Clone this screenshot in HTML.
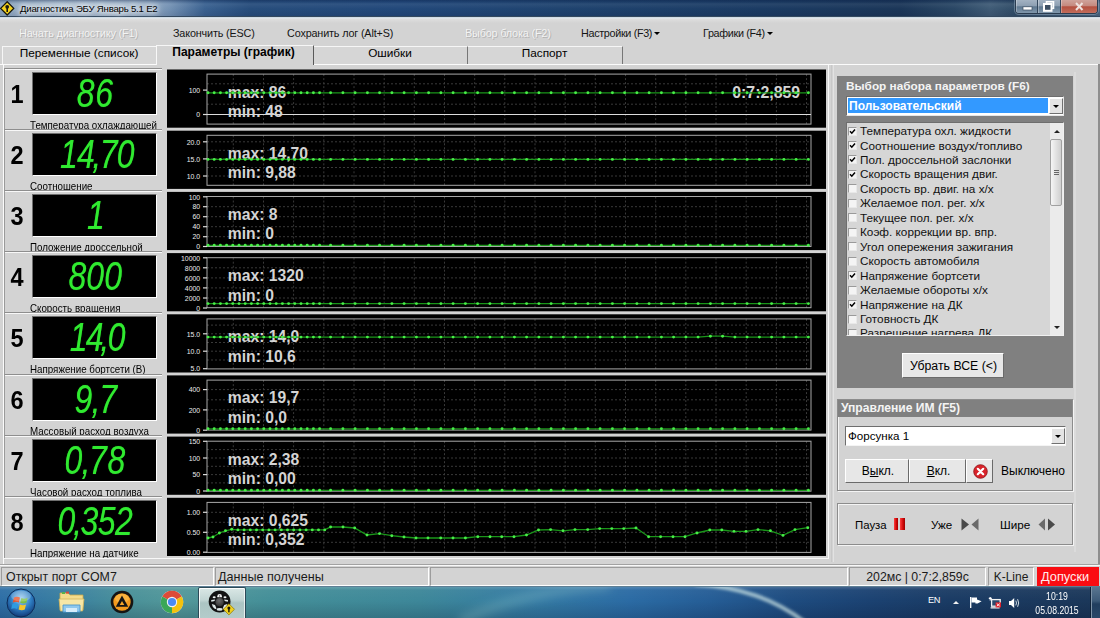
<!DOCTYPE html>
<html lang="ru"><head><meta charset="utf-8"><title>Диагностика ЭБУ Январь 5.1 E2</title><style>
html,body{margin:0;padding:0}
body{width:1100px;height:618px;overflow:hidden;position:relative;background:#d3d3d3;font-family:"Liberation Sans",sans-serif;color:#000}
div,span{box-sizing:border-box}
.a{position:absolute;white-space:nowrap}
.menu{position:absolute;top:27px;font-size:10.8px;line-height:13px;white-space:nowrap;letter-spacing:-0.15px;color:#151515}
.dis{color:#f4f4f4;text-shadow:1px 1px 0 #b4b4b4, -0.5px -0.5px 0 #c4c4c4}
.tab{position:absolute;top:46px;height:18px;font-size:11.8px;line-height:16px;text-align:center;white-space:nowrap;border-right:1px solid #777;border-top:1px solid #f6f6f6;background:#d6d6d6}
.rowp{position:absolute;left:4px;width:158px;height:63px;border-top:1px solid #8e8e8e;border-left:1px solid #9a9a9a;box-shadow:inset 0 1px 0 #f8f8f8;overflow:hidden}
.num{position:absolute;left:4px;top:12px;font-weight:bold;font-size:25px;line-height:28px;width:16px;text-align:center;transform:scaleX(.94)}
.disp{position:absolute;left:27px;top:4px;width:125px;height:43px;background:#000;border-top:1px solid #6e6e6e;border-left:1px solid #6e6e6e;border-right:1px solid #fff;border-bottom:1px solid #fff;overflow:hidden}
.seg{position:absolute;left:-10px;right:-10px;top:1px;text-align:center;color:#30ea30;font-style:italic;font-size:40px;line-height:38px;transform:scaleX(0.8);letter-spacing:0.5px;text-shadow:0 0 1px #1a8a1a}
.seg i{font-style:italic;display:inline-block;width:8px;margin-left:-2px;margin-right:1.5px}
.lbl{position:absolute;left:25px;font-size:10.5px;line-height:12px;white-space:nowrap;color:#000;transform:scaleX(.93);transform-origin:0 0}
.gp{position:absolute;left:167px;width:659px;height:59px;background:#000}

.t12{font-size:12px;line-height:14px}
.btn{position:absolute;background:#e7e7e7;border-top:1px solid #fff;border-left:1px solid #fff;border-right:1px solid #6a6a6a;border-bottom:1px solid #6a6a6a;text-align:center;white-space:nowrap}
.etch{position:absolute;border:1px solid #8c8c8c;box-shadow:1px 1px 0 #f4f4f4, inset 1px 1px 0 #f4f4f4}
.cb{position:absolute;left:1px;width:9px;height:9px;background:#f4f4f4;border:1px solid #9a9a9a;border-right-color:#e8e8e8;border-bottom-color:#e8e8e8}
.li{position:absolute;left:13px;font-size:11.75px;line-height:14px;white-space:nowrap;color:#111}
.sf{position:absolute;top:567px;height:19px;border-top:1px solid #9c9c9c;border-left:1px solid #9c9c9c;border-right:1px solid #fff;border-bottom:1px solid #fff;font-size:12.4px;line-height:18px;white-space:nowrap;color:#1a1a1a}
</style></head><body>
<div class="a" style="left:0;top:0;width:1100px;height:17px;background:linear-gradient(90deg,#8ba4be 0,#a9bccf 60px,#9fb4ca 135px,#7391b3 170px,#3a6190 205px,#274d7c 250px,#22487a 400px,#1f436f 560px,#1b3b63 760px,#1b3658 900px,#2a4765 955px,#3f5b76 990px,#314d68 1015px,#4a657f 1100px)"></div>
<div class="a" style="left:0;top:0;width:1100px;height:17px;background:linear-gradient(180deg,rgba(10,30,70,.38) 0,rgba(10,30,70,.12) 2px,rgba(255,255,255,.06) 4px,rgba(255,255,255,0) 9px,rgba(0,0,30,.10) 17px)"></div>
<div class="a" style="left:0;top:16px;width:1100px;height:1px;background:#34495f"></div>
<div class="a" style="left:0;top:17px;width:1100px;height:2px;background:linear-gradient(180deg,#c9d9e6,#e8e8e8)"></div>
<div class="a" style="left:0;top:19px;width:1100px;height:4px;background:linear-gradient(180deg,#dedede,#d3d3d3)"></div>
<svg class="a" style="left:0;top:1px" width="15" height="15" viewBox="0 0 15 15"><path d="M7.2 0.8 L13.8 7.4 L7.2 14 L0.6 7.4 Z" fill="#f4d21c" stroke="#15150c" stroke-width="1.3" stroke-linejoin="round"/><circle cx="7.2" cy="5.8" r="1.9" fill="#1a1a12"/><rect x="6.4" y="7" width="1.6" height="4" fill="#1a1a12"/></svg><div class="a" style="left:20px;top:3px;font-size:9.6px;line-height:12px;letter-spacing:-0.2px;color:#000;text-shadow:0 0 4px #fff,0 0 6px #fff,0 0 8px #fff">Диагностика ЭБУ Январь 5.1 E2</div>
<div class="a" style="left:1015px;top:0;width:83px;height:14px;border:1px solid #2a3c50;border-top:0;border-radius:0 0 4px 4px;overflow:hidden;background:#7d93a8;box-shadow:0 0 0 1px rgba(190,210,225,.35)">
<div class="a" style="left:0;top:0;width:22px;height:13px;background:linear-gradient(180deg,#a3b2c2 0,#8d9fb2 45%,#5f7890 52%,#8097ac 100%);border-right:1px solid #33475c;box-shadow:inset 1px 0 0 rgba(255,255,255,.3)"></div>
<div class="a" style="left:22px;top:0;width:23px;height:13px;background:linear-gradient(180deg,#a3b2c2 0,#8d9fb2 45%,#5f7890 52%,#8097ac 100%);border-right:1px solid #33475c;box-shadow:inset 1px 0 0 rgba(255,255,255,.3)"></div>
<div class="a" style="left:45px;top:0;width:37px;height:13px;background:linear-gradient(180deg,#cfa39b 0,#c58a7f 45%,#b4503f 52%,#c26d5c 100%);box-shadow:inset 1px 0 0 rgba(255,255,255,.3)"></div>
<svg class="a" style="left:0;top:0" width="82" height="13" viewBox="0 0 82 13"><rect x="7" y="6.8" width="9" height="3.2" fill="#fff" stroke="#3c4e62" stroke-width=".7"/>
<rect x="30.5" y="1.8" width="7" height="6.5" fill="none" stroke="#fff" stroke-width="1.6"/><rect x="28" y="4" width="7.5" height="6.8" fill="#3c4e62" stroke="#fff" stroke-width="2"/>
<path d="M60 3 L66.5 10 M66.5 3 L60 10" stroke="#efe2de" stroke-width="2" fill="none"/></svg>
</div>
<div class="menu dis" style="left:19px">Начать диагностику (F1)</div>
<div class="menu" style="left:173px">Закончить (ESC)</div>
<div class="menu" style="left:287px">Сохранить лог (Alt+S)</div>
<div class="menu dis" style="left:465px">Выбор блока (F2)</div>
<div class="menu" style="left:581px;letter-spacing:-0.33px">Настройки (F3)<span style="display:inline-block;width:0;height:0;border-left:3px solid transparent;border-right:3px solid transparent;border-top:3px solid #000;margin-left:2px;vertical-align:2px"></span></div>
<div class="menu" style="left:703px;letter-spacing:-0.33px">Графики (F4)<span style="display:inline-block;width:0;height:0;border-left:3px solid transparent;border-right:3px solid transparent;border-top:3px solid #000;margin-left:2px;vertical-align:2px"></span></div>
<div class="a" style="left:0;top:64px;width:1098px;height:1px;background:#fbfbfb"></div>
<div class="a" style="left:1098px;top:64px;width:2px;height:500px;background:#8e8e8e"></div>
<div class="a" style="left:3px;top:65px;width:1px;height:500px;background:#fbfbfb"></div>
<div class="tab" style="left:2px;width:155px;border-left:1px solid #f6f6f6;line-height:13px;padding-right:1px">Переменные (список)</div>
<div class="tab" style="left:156px;width:158px;top:45px;height:20px;font-weight:bold;background:#d3d3d3;border-left:1px solid #f8f8f8;border-right:1px solid #5a5a5a;line-height:13px;font-size:12px;padding-right:3px">Параметры (график)</div>
<div class="tab" style="left:314px;width:154px;line-height:13px;padding-right:1px">Ошибки</div>
<div class="tab" style="left:468px;width:155px;line-height:13px;padding-right:1px">Паспорт</div>
<div class="rowp" style="top:68px"><div class="num" style="top:11px">1</div><div class="disp" style="top:3px"><div class="seg" style="letter-spacing:0.90px;margin-left:0.6px">86</div></div><div class="lbl" style="top:49.7px">Температура охлаждающей</div></div>
<div class="rowp" style="top:129px"><div class="num" style="top:11px">2</div><div class="disp" style="top:3px"><div class="seg" style="letter-spacing:-1.05px;margin-left:5.3px">14<i>,</i>70</div></div><div class="lbl" style="top:49.7px">Соотношение</div></div>
<div class="rowp" style="top:190px"><div class="num" style="top:11px">3</div><div class="disp" style="top:3px"><div class="seg" style="letter-spacing:0.50px;margin-left:2.8px">1</div></div><div class="lbl" style="top:49.7px">Положение дроссельной</div></div>
<div class="rowp" style="top:251px"><div class="num" style="top:11px">4</div><div class="disp" style="top:3px"><div class="seg" style="letter-spacing:0.20px;margin-left:2.3px">800</div></div><div class="lbl" style="top:49.7px">Скорость вращения</div></div>
<div class="rowp" style="top:312px"><div class="num" style="top:11px">5</div><div class="disp" style="top:3px"><div class="seg" style="letter-spacing:-2.30px;margin-left:5.4px">14<i>,</i>0</div></div><div class="lbl" style="top:49.7px">Напряжение бортсети (В)</div></div>
<div class="rowp" style="top:374px"><div class="num" style="top:11px">6</div><div class="disp" style="top:3px"><div class="seg" style="letter-spacing:1.25px;margin-left:2.6px">9<i>,</i>7</div></div><div class="lbl" style="top:49.7px">Массовый расход воздуха</div></div>
<div class="rowp" style="top:435px"><div class="num" style="top:11px">7</div><div class="disp" style="top:3px"><div class="seg" style="letter-spacing:0.90px;margin-left:2.3px">0<i>,</i>78</div></div><div class="lbl" style="top:49.7px">Часовой расход топлива</div></div>
<div class="rowp" style="top:496px"><div class="num" style="top:11px">8</div><div class="disp" style="top:3px"><div class="seg" style="letter-spacing:-0.75px;margin-left:1.4px">0<i>,</i>352</div></div><div class="lbl" style="top:49.7px">Напряжение на датчике</div></div>
<svg class="a" style="left:167px;top:69px" width="660" height="490" viewBox="167 69 660 490"><defs><marker id="dot" markerWidth="5" markerHeight="5" refX="2.5" refY="2.5" markerUnits="userSpaceOnUse"><circle cx="2.5" cy="2.5" r="1.45" fill="#48ee48"/></marker></defs><rect x="167" y="69.5" width="659" height="58.2" fill="#000"/><g stroke="#393939" stroke-width="1" stroke-dasharray="2 2"><line x1="233.3" y1="74.1" x2="233.3" y2="124.1"/><line x1="263.5" y1="74.1" x2="263.5" y2="124.1"/><line x1="293.6" y1="74.1" x2="293.6" y2="124.1"/><line x1="323.8" y1="74.1" x2="323.8" y2="124.1"/><line x1="354.0" y1="74.1" x2="354.0" y2="124.1"/><line x1="384.2" y1="74.1" x2="384.2" y2="124.1"/><line x1="414.3" y1="74.1" x2="414.3" y2="124.1"/><line x1="444.5" y1="74.1" x2="444.5" y2="124.1"/><line x1="474.7" y1="74.1" x2="474.7" y2="124.1"/><line x1="504.8" y1="74.1" x2="504.8" y2="124.1"/><line x1="535.0" y1="74.1" x2="535.0" y2="124.1"/><line x1="565.2" y1="74.1" x2="565.2" y2="124.1"/><line x1="595.3" y1="74.1" x2="595.3" y2="124.1"/><line x1="625.5" y1="74.1" x2="625.5" y2="124.1"/><line x1="655.7" y1="74.1" x2="655.7" y2="124.1"/><line x1="685.8" y1="74.1" x2="685.8" y2="124.1"/><line x1="716.0" y1="74.1" x2="716.0" y2="124.1"/><line x1="746.2" y1="74.1" x2="746.2" y2="124.1"/><line x1="776.4" y1="74.1" x2="776.4" y2="124.1"/><line x1="806.5" y1="74.1" x2="806.5" y2="124.1"/><line x1="207" y1="83.8" x2="811" y2="83.8"/><line x1="207" y1="104.2" x2="811" y2="104.2"/></g><rect x="207" y="74.1" width="604" height="50.0" fill="none" stroke="#a8a8a8" stroke-width="1"/><line x1="203" y1="114.5" x2="811" y2="114.5" stroke="#dcdcdc" stroke-width="1.1"/><text transform="translate(200.2,92.8) scale(.9,1)" font-family="Liberation Sans, sans-serif" font-size="7.7" fill="#ececec" text-anchor="end">100</text><line x1="203" y1="90.1" x2="207" y2="90.1" stroke="#dadada" stroke-width="1.2"/><text transform="translate(200.2,117.2) scale(.9,1)" font-family="Liberation Sans, sans-serif" font-size="7.7" fill="#ececec" text-anchor="end">0</text><line x1="203" y1="114.5" x2="207" y2="114.5" stroke="#dadada" stroke-width="1.2"/><text x="227.8" y="97.5" font-family="Liberation Sans, sans-serif" font-weight="bold" font-size="15.7" fill="#d4d4d4">max: 86</text><text x="227.8" y="117.0" font-family="Liberation Sans, sans-serif" font-weight="bold" font-size="15.7" fill="#d4d4d4">min: 48</text> <text x="732.2" y="97.5" font-family="Liberation Sans, sans-serif" font-weight="bold" font-size="15.9" fill="#d4d4d4">0:7:2,859</text><polyline points="208.0,92.8 214.2,92.8 220.4,92.8 226.6,92.8 232.8,92.8 239.0,92.8 245.2,92.8 251.4,92.8 257.6,92.8 263.8,92.8 270.0,92.8 276.2,92.8 282.4,92.8 288.6,92.8 294.8,92.8 301.0,92.8 307.2,92.8 313.4,92.8 319.6,92.8 330.6,92.8 342.9,92.8 355.1,92.8 367.4,92.8 379.6,92.8 391.9,92.8 404.1,92.8 416.4,92.8 428.6,92.8 440.9,92.8 453.1,92.8 465.4,92.8 477.6,92.8 489.9,92.8 502.1,92.8 514.4,92.8 526.6,92.8 538.9,92.8 551.1,92.8 563.4,92.8 575.6,92.8 587.9,92.8 600.1,92.8 612.4,92.8 624.6,92.8 636.9,92.8 649.1,92.8 661.4,92.8 673.6,92.8 685.9,92.8 698.1,92.8 710.4,92.8 722.6,92.8 734.9,92.8 747.1,92.8 759.4,92.8 771.6,92.8 783.9,92.8 796.1,92.8 808.4,92.8" fill="none" stroke="#1a961a" stroke-width="1.3" marker-start="url(#dot)" marker-mid="url(#dot)" marker-end="url(#dot)"/><rect x="167" y="130.7" width="659" height="58.2" fill="#000"/><g stroke="#393939" stroke-width="1" stroke-dasharray="2 2"><line x1="233.3" y1="135.3" x2="233.3" y2="185.3"/><line x1="263.5" y1="135.3" x2="263.5" y2="185.3"/><line x1="293.6" y1="135.3" x2="293.6" y2="185.3"/><line x1="323.8" y1="135.3" x2="323.8" y2="185.3"/><line x1="354.0" y1="135.3" x2="354.0" y2="185.3"/><line x1="384.2" y1="135.3" x2="384.2" y2="185.3"/><line x1="414.3" y1="135.3" x2="414.3" y2="185.3"/><line x1="444.5" y1="135.3" x2="444.5" y2="185.3"/><line x1="474.7" y1="135.3" x2="474.7" y2="185.3"/><line x1="504.8" y1="135.3" x2="504.8" y2="185.3"/><line x1="535.0" y1="135.3" x2="535.0" y2="185.3"/><line x1="565.2" y1="135.3" x2="565.2" y2="185.3"/><line x1="595.3" y1="135.3" x2="595.3" y2="185.3"/><line x1="625.5" y1="135.3" x2="625.5" y2="185.3"/><line x1="655.7" y1="135.3" x2="655.7" y2="185.3"/><line x1="685.8" y1="135.3" x2="685.8" y2="185.3"/><line x1="716.0" y1="135.3" x2="716.0" y2="185.3"/><line x1="746.2" y1="135.3" x2="746.2" y2="185.3"/><line x1="776.4" y1="135.3" x2="776.4" y2="185.3"/><line x1="806.5" y1="135.3" x2="806.5" y2="185.3"/><line x1="207" y1="141.8" x2="811" y2="141.8"/><line x1="207" y1="150.3" x2="811" y2="150.3"/><line x1="207" y1="158.9" x2="811" y2="158.9"/><line x1="207" y1="167.5" x2="811" y2="167.5"/><line x1="207" y1="176.0" x2="811" y2="176.0"/></g><rect x="207" y="135.3" width="604" height="50.0" fill="none" stroke="#a8a8a8" stroke-width="1"/><text transform="translate(200.2,144.5) scale(.9,1)" font-family="Liberation Sans, sans-serif" font-size="7.7" fill="#ececec" text-anchor="end">20.0</text><line x1="203" y1="141.8" x2="207" y2="141.8" stroke="#dadada" stroke-width="1.2"/><text transform="translate(200.2,161.6) scale(.9,1)" font-family="Liberation Sans, sans-serif" font-size="7.7" fill="#ececec" text-anchor="end">15.0</text><line x1="203" y1="158.9" x2="207" y2="158.9" stroke="#dadada" stroke-width="1.2"/><text transform="translate(200.2,178.7) scale(.9,1)" font-family="Liberation Sans, sans-serif" font-size="7.7" fill="#ececec" text-anchor="end">10.0</text><line x1="203" y1="176.0" x2="207" y2="176.0" stroke="#dadada" stroke-width="1.2"/><text x="227.8" y="158.7" font-family="Liberation Sans, sans-serif" font-weight="bold" font-size="15.7" fill="#d4d4d4">max: 14,70</text><text x="227.8" y="178.2" font-family="Liberation Sans, sans-serif" font-weight="bold" font-size="15.7" fill="#d4d4d4">min: 9,88</text><polyline points="208.0,159.4 214.2,159.4 220.4,159.4 226.6,159.4 232.8,159.4 239.0,159.4 245.2,159.4 251.4,159.4 257.6,159.4 263.8,159.4 270.0,159.4 276.2,159.4 282.4,159.4 288.6,159.4 294.8,159.4 301.0,159.4 307.2,159.4 313.4,159.4 319.6,159.4 330.6,159.4 342.9,159.4 355.1,159.4 367.4,159.4 379.6,159.4 391.9,159.4 404.1,159.4 416.4,159.4 428.6,159.4 440.9,159.4 453.1,159.4 465.4,159.4 477.6,159.4 489.9,159.4 502.1,159.4 514.4,159.4 526.6,159.4 538.9,159.4 551.1,159.4 563.4,159.4 575.6,159.4 587.9,159.4 600.1,159.4 612.4,159.4 624.6,159.4 636.9,159.4 649.1,159.4 661.4,159.4 673.6,159.4 685.9,159.4 698.1,159.4 710.4,159.4 722.6,159.4 734.9,159.4 747.1,159.4 759.4,159.4 771.6,159.4 783.9,159.4 796.1,159.4 808.4,159.4" fill="none" stroke="#1a961a" stroke-width="1.3" marker-start="url(#dot)" marker-mid="url(#dot)" marker-end="url(#dot)"/><rect x="167" y="191.9" width="659" height="58.2" fill="#000"/><g stroke="#393939" stroke-width="1" stroke-dasharray="2 2"><line x1="233.3" y1="196.5" x2="233.3" y2="246.5"/><line x1="263.5" y1="196.5" x2="263.5" y2="246.5"/><line x1="293.6" y1="196.5" x2="293.6" y2="246.5"/><line x1="323.8" y1="196.5" x2="323.8" y2="246.5"/><line x1="354.0" y1="196.5" x2="354.0" y2="246.5"/><line x1="384.2" y1="196.5" x2="384.2" y2="246.5"/><line x1="414.3" y1="196.5" x2="414.3" y2="246.5"/><line x1="444.5" y1="196.5" x2="444.5" y2="246.5"/><line x1="474.7" y1="196.5" x2="474.7" y2="246.5"/><line x1="504.8" y1="196.5" x2="504.8" y2="246.5"/><line x1="535.0" y1="196.5" x2="535.0" y2="246.5"/><line x1="565.2" y1="196.5" x2="565.2" y2="246.5"/><line x1="595.3" y1="196.5" x2="595.3" y2="246.5"/><line x1="625.5" y1="196.5" x2="625.5" y2="246.5"/><line x1="655.7" y1="196.5" x2="655.7" y2="246.5"/><line x1="685.8" y1="196.5" x2="685.8" y2="246.5"/><line x1="716.0" y1="196.5" x2="716.0" y2="246.5"/><line x1="746.2" y1="196.5" x2="746.2" y2="246.5"/><line x1="776.4" y1="196.5" x2="776.4" y2="246.5"/><line x1="806.5" y1="196.5" x2="806.5" y2="246.5"/><line x1="207" y1="206.7" x2="811" y2="206.7"/><line x1="207" y1="216.7" x2="811" y2="216.7"/><line x1="207" y1="226.7" x2="811" y2="226.7"/><line x1="207" y1="236.7" x2="811" y2="236.7"/></g><rect x="207" y="196.5" width="604" height="50.0" fill="none" stroke="#a8a8a8" stroke-width="1"/><text transform="translate(200.2,199.5) scale(.9,1)" font-family="Liberation Sans, sans-serif" font-size="7.7" fill="#ececec" text-anchor="end">100</text><line x1="203" y1="196.8" x2="207" y2="196.8" stroke="#dadada" stroke-width="1.2"/><text transform="translate(200.2,209.4) scale(.9,1)" font-family="Liberation Sans, sans-serif" font-size="7.7" fill="#ececec" text-anchor="end">80</text><line x1="203" y1="206.7" x2="207" y2="206.7" stroke="#dadada" stroke-width="1.2"/><text transform="translate(200.2,219.4) scale(.9,1)" font-family="Liberation Sans, sans-serif" font-size="7.7" fill="#ececec" text-anchor="end">60</text><line x1="203" y1="216.7" x2="207" y2="216.7" stroke="#dadada" stroke-width="1.2"/><text transform="translate(200.2,229.4) scale(.9,1)" font-family="Liberation Sans, sans-serif" font-size="7.7" fill="#ececec" text-anchor="end">40</text><line x1="203" y1="226.7" x2="207" y2="226.7" stroke="#dadada" stroke-width="1.2"/><text transform="translate(200.2,239.4) scale(.9,1)" font-family="Liberation Sans, sans-serif" font-size="7.7" fill="#ececec" text-anchor="end">20</text><line x1="203" y1="236.7" x2="207" y2="236.7" stroke="#dadada" stroke-width="1.2"/><text transform="translate(200.2,249.2) scale(.9,1)" font-family="Liberation Sans, sans-serif" font-size="7.7" fill="#ececec" text-anchor="end">0</text><line x1="203" y1="246.5" x2="207" y2="246.5" stroke="#dadada" stroke-width="1.2"/><text x="227.8" y="219.9" font-family="Liberation Sans, sans-serif" font-weight="bold" font-size="15.7" fill="#d4d4d4">max: 8</text><text x="227.8" y="239.4" font-family="Liberation Sans, sans-serif" font-weight="bold" font-size="15.7" fill="#d4d4d4">min: 0</text><polyline points="208.0,245.3 214.2,245.3 220.4,245.3 226.6,245.3 232.8,245.3 239.0,245.3 245.2,245.3 251.4,245.3 257.6,245.3 263.8,245.3 270.0,245.3 276.2,245.3 282.4,245.3 288.6,245.3 294.8,245.3 301.0,245.3 307.2,245.3 313.4,245.3 319.6,245.3 330.6,245.3 342.9,245.3 355.1,245.3 367.4,245.3 379.6,245.3 391.9,245.3 404.1,245.3 416.4,245.3 428.6,245.3 440.9,245.3 453.1,245.3 465.4,245.3 477.6,245.3 489.9,245.3 502.1,245.3 514.4,245.3 526.6,245.3 538.9,245.3 551.1,245.3 563.4,245.3 575.6,245.3 587.9,245.3 600.1,245.3 612.4,245.3 624.6,245.3 636.9,245.3 649.1,245.3 661.4,245.3 673.6,245.3 685.9,245.3 698.1,245.3 710.4,245.3 722.6,245.3 734.9,245.3 747.1,245.3 759.4,245.3 771.6,245.3 783.9,245.3 796.1,245.3 808.4,245.3" fill="none" stroke="#1a961a" stroke-width="1.3" marker-start="url(#dot)" marker-mid="url(#dot)" marker-end="url(#dot)"/><rect x="167" y="253.1" width="659" height="58.2" fill="#000"/><g stroke="#393939" stroke-width="1" stroke-dasharray="2 2"><line x1="233.3" y1="257.7" x2="233.3" y2="307.7"/><line x1="263.5" y1="257.7" x2="263.5" y2="307.7"/><line x1="293.6" y1="257.7" x2="293.6" y2="307.7"/><line x1="323.8" y1="257.7" x2="323.8" y2="307.7"/><line x1="354.0" y1="257.7" x2="354.0" y2="307.7"/><line x1="384.2" y1="257.7" x2="384.2" y2="307.7"/><line x1="414.3" y1="257.7" x2="414.3" y2="307.7"/><line x1="444.5" y1="257.7" x2="444.5" y2="307.7"/><line x1="474.7" y1="257.7" x2="474.7" y2="307.7"/><line x1="504.8" y1="257.7" x2="504.8" y2="307.7"/><line x1="535.0" y1="257.7" x2="535.0" y2="307.7"/><line x1="565.2" y1="257.7" x2="565.2" y2="307.7"/><line x1="595.3" y1="257.7" x2="595.3" y2="307.7"/><line x1="625.5" y1="257.7" x2="625.5" y2="307.7"/><line x1="655.7" y1="257.7" x2="655.7" y2="307.7"/><line x1="685.8" y1="257.7" x2="685.8" y2="307.7"/><line x1="716.0" y1="257.7" x2="716.0" y2="307.7"/><line x1="746.2" y1="257.7" x2="746.2" y2="307.7"/><line x1="776.4" y1="257.7" x2="776.4" y2="307.7"/><line x1="806.5" y1="257.7" x2="806.5" y2="307.7"/><line x1="207" y1="267.8" x2="811" y2="267.8"/><line x1="207" y1="277.9" x2="811" y2="277.9"/><line x1="207" y1="287.9" x2="811" y2="287.9"/><line x1="207" y1="298.0" x2="811" y2="298.0"/></g><rect x="207" y="257.7" width="604" height="50.0" fill="none" stroke="#a8a8a8" stroke-width="1"/><text transform="translate(200.2,260.5) scale(.9,1)" font-family="Liberation Sans, sans-serif" font-size="7.7" fill="#ececec" text-anchor="end">10000</text><line x1="203" y1="257.8" x2="207" y2="257.8" stroke="#dadada" stroke-width="1.2"/><text transform="translate(200.2,270.5) scale(.9,1)" font-family="Liberation Sans, sans-serif" font-size="7.7" fill="#ececec" text-anchor="end">8000</text><line x1="203" y1="267.8" x2="207" y2="267.8" stroke="#dadada" stroke-width="1.2"/><text transform="translate(200.2,280.6) scale(.9,1)" font-family="Liberation Sans, sans-serif" font-size="7.7" fill="#ececec" text-anchor="end">6000</text><line x1="203" y1="277.9" x2="207" y2="277.9" stroke="#dadada" stroke-width="1.2"/><text transform="translate(200.2,290.6) scale(.9,1)" font-family="Liberation Sans, sans-serif" font-size="7.7" fill="#ececec" text-anchor="end">4000</text><line x1="203" y1="287.9" x2="207" y2="287.9" stroke="#dadada" stroke-width="1.2"/><text transform="translate(200.2,300.7) scale(.9,1)" font-family="Liberation Sans, sans-serif" font-size="7.7" fill="#ececec" text-anchor="end">2000</text><line x1="203" y1="298.0" x2="207" y2="298.0" stroke="#dadada" stroke-width="1.2"/><text transform="translate(200.2,310.7) scale(.9,1)" font-family="Liberation Sans, sans-serif" font-size="7.7" fill="#ececec" text-anchor="end">0</text><line x1="203" y1="308.0" x2="207" y2="308.0" stroke="#dadada" stroke-width="1.2"/><text x="227.8" y="281.1" font-family="Liberation Sans, sans-serif" font-weight="bold" font-size="15.7" fill="#d4d4d4">max: 1320</text><text x="227.8" y="300.6" font-family="Liberation Sans, sans-serif" font-weight="bold" font-size="15.7" fill="#d4d4d4">min: 0</text><polyline points="208.0,303.6 214.2,303.6 220.4,303.6 226.6,303.6 232.8,303.6 239.0,303.6 245.2,303.6 251.4,303.6 257.6,303.6 263.8,303.6 270.0,303.6 276.2,303.6 282.4,303.6 288.6,303.6 294.8,303.6 301.0,303.6 307.2,303.6 313.4,303.6 319.6,303.6 330.6,303.6 342.9,303.6 355.1,303.6 367.4,303.6 379.6,303.6 391.9,303.6 404.1,303.6 416.4,303.6 428.6,303.6 440.9,303.6 453.1,303.6 465.4,303.6 477.6,303.6 489.9,303.6 502.1,303.6 514.4,303.6 526.6,303.6 538.9,303.6 551.1,303.6 563.4,303.6 575.6,303.6 587.9,303.6 600.1,303.6 612.4,303.6 624.6,303.6 636.9,303.6 649.1,303.6 661.4,303.6 673.6,303.6 685.9,303.6 698.1,303.6 710.4,303.6 722.6,303.6 734.9,303.6 747.1,303.6 759.4,303.6 771.6,303.6 783.9,303.6 796.1,303.6 808.4,303.6" fill="none" stroke="#1a961a" stroke-width="1.3" marker-start="url(#dot)" marker-mid="url(#dot)" marker-end="url(#dot)"/><rect x="167" y="314.3" width="659" height="58.2" fill="#000"/><g stroke="#393939" stroke-width="1" stroke-dasharray="2 2"><line x1="233.3" y1="318.9" x2="233.3" y2="368.9"/><line x1="263.5" y1="318.9" x2="263.5" y2="368.9"/><line x1="293.6" y1="318.9" x2="293.6" y2="368.9"/><line x1="323.8" y1="318.9" x2="323.8" y2="368.9"/><line x1="354.0" y1="318.9" x2="354.0" y2="368.9"/><line x1="384.2" y1="318.9" x2="384.2" y2="368.9"/><line x1="414.3" y1="318.9" x2="414.3" y2="368.9"/><line x1="444.5" y1="318.9" x2="444.5" y2="368.9"/><line x1="474.7" y1="318.9" x2="474.7" y2="368.9"/><line x1="504.8" y1="318.9" x2="504.8" y2="368.9"/><line x1="535.0" y1="318.9" x2="535.0" y2="368.9"/><line x1="565.2" y1="318.9" x2="565.2" y2="368.9"/><line x1="595.3" y1="318.9" x2="595.3" y2="368.9"/><line x1="625.5" y1="318.9" x2="625.5" y2="368.9"/><line x1="655.7" y1="318.9" x2="655.7" y2="368.9"/><line x1="685.8" y1="318.9" x2="685.8" y2="368.9"/><line x1="716.0" y1="318.9" x2="716.0" y2="368.9"/><line x1="746.2" y1="318.9" x2="746.2" y2="368.9"/><line x1="776.4" y1="318.9" x2="776.4" y2="368.9"/><line x1="806.5" y1="318.9" x2="806.5" y2="368.9"/><line x1="207" y1="325.1" x2="811" y2="325.1"/><line x1="207" y1="333.8" x2="811" y2="333.8"/><line x1="207" y1="342.5" x2="811" y2="342.5"/><line x1="207" y1="351.2" x2="811" y2="351.2"/><line x1="207" y1="360.0" x2="811" y2="360.0"/></g><rect x="207" y="318.9" width="604" height="50.0" fill="none" stroke="#a8a8a8" stroke-width="1"/><text transform="translate(200.2,336.5) scale(.9,1)" font-family="Liberation Sans, sans-serif" font-size="7.7" fill="#ececec" text-anchor="end">15.0</text><line x1="203" y1="333.8" x2="207" y2="333.8" stroke="#dadada" stroke-width="1.2"/><text transform="translate(200.2,353.9) scale(.9,1)" font-family="Liberation Sans, sans-serif" font-size="7.7" fill="#ececec" text-anchor="end">10.0</text><line x1="203" y1="351.2" x2="207" y2="351.2" stroke="#dadada" stroke-width="1.2"/><text transform="translate(200.2,371.4) scale(.9,1)" font-family="Liberation Sans, sans-serif" font-size="7.7" fill="#ececec" text-anchor="end">5.0</text><line x1="203" y1="368.7" x2="207" y2="368.7" stroke="#dadada" stroke-width="1.2"/><text x="227.8" y="342.3" font-family="Liberation Sans, sans-serif" font-weight="bold" font-size="15.7" fill="#d4d4d4">max: 14,0</text><text x="227.8" y="361.8" font-family="Liberation Sans, sans-serif" font-weight="bold" font-size="15.7" fill="#d4d4d4">min: 10,6</text><polyline points="208.0,337.1 214.2,337.1 220.4,337.1 226.6,337.1 232.8,337.1 239.0,337.1 245.2,337.1 251.4,337.1 257.6,337.1 263.8,337.1 270.0,337.1 276.2,337.1 282.4,337.1 288.6,337.1 294.8,337.1 301.0,337.1 307.2,337.1 313.4,337.1 319.6,337.1 330.6,337.1 342.9,337.1 355.1,337.1 367.4,337.1 379.6,337.1 391.9,337.1 404.1,337.1 416.4,337.1 428.6,337.1 440.9,337.1 453.1,337.1 465.4,337.1 477.6,337.1 489.9,337.1 502.1,337.1 514.4,337.1 526.6,337.1 538.9,337.1 551.1,337.1 563.4,337.1 575.6,337.1 587.9,337.1 600.1,337.1 612.4,337.1 624.6,337.1 636.9,337.1 649.1,337.1 661.4,337.1 673.6,337.1 685.9,337.1 698.1,337.1 710.4,336.2 722.6,336.2 734.9,337.1 747.1,337.1 759.4,337.1 771.6,337.1 783.9,337.1 796.1,337.1 808.4,337.1" fill="none" stroke="#1a961a" stroke-width="1.3" marker-start="url(#dot)" marker-mid="url(#dot)" marker-end="url(#dot)"/><rect x="167" y="375.4" width="659" height="58.2" fill="#000"/><g stroke="#393939" stroke-width="1" stroke-dasharray="2 2"><line x1="233.3" y1="380.1" x2="233.3" y2="430.1"/><line x1="263.5" y1="380.1" x2="263.5" y2="430.1"/><line x1="293.6" y1="380.1" x2="293.6" y2="430.1"/><line x1="323.8" y1="380.1" x2="323.8" y2="430.1"/><line x1="354.0" y1="380.1" x2="354.0" y2="430.1"/><line x1="384.2" y1="380.1" x2="384.2" y2="430.1"/><line x1="414.3" y1="380.1" x2="414.3" y2="430.1"/><line x1="444.5" y1="380.1" x2="444.5" y2="430.1"/><line x1="474.7" y1="380.1" x2="474.7" y2="430.1"/><line x1="504.8" y1="380.1" x2="504.8" y2="430.1"/><line x1="535.0" y1="380.1" x2="535.0" y2="430.1"/><line x1="565.2" y1="380.1" x2="565.2" y2="430.1"/><line x1="595.3" y1="380.1" x2="595.3" y2="430.1"/><line x1="625.5" y1="380.1" x2="625.5" y2="430.1"/><line x1="655.7" y1="380.1" x2="655.7" y2="430.1"/><line x1="685.8" y1="380.1" x2="685.8" y2="430.1"/><line x1="716.0" y1="380.1" x2="716.0" y2="430.1"/><line x1="746.2" y1="380.1" x2="746.2" y2="430.1"/><line x1="776.4" y1="380.1" x2="776.4" y2="430.1"/><line x1="806.5" y1="380.1" x2="806.5" y2="430.1"/><line x1="207" y1="389.6" x2="811" y2="389.6"/><line x1="207" y1="399.8" x2="811" y2="399.8"/><line x1="207" y1="409.9" x2="811" y2="409.9"/><line x1="207" y1="420.0" x2="811" y2="420.0"/></g><rect x="207" y="380.1" width="604" height="50.0" fill="none" stroke="#a8a8a8" stroke-width="1"/><text transform="translate(200.2,392.3) scale(.9,1)" font-family="Liberation Sans, sans-serif" font-size="7.7" fill="#ececec" text-anchor="end">400</text><line x1="203" y1="389.6" x2="207" y2="389.6" stroke="#dadada" stroke-width="1.2"/><text transform="translate(200.2,412.6) scale(.9,1)" font-family="Liberation Sans, sans-serif" font-size="7.7" fill="#ececec" text-anchor="end">200</text><line x1="203" y1="409.9" x2="207" y2="409.9" stroke="#dadada" stroke-width="1.2"/><text transform="translate(200.2,432.9) scale(.9,1)" font-family="Liberation Sans, sans-serif" font-size="7.7" fill="#ececec" text-anchor="end">0</text><line x1="203" y1="430.2" x2="207" y2="430.2" stroke="#dadada" stroke-width="1.2"/><text x="227.8" y="403.4" font-family="Liberation Sans, sans-serif" font-weight="bold" font-size="15.7" fill="#d4d4d4">max: 19,7</text><text x="227.8" y="422.9" font-family="Liberation Sans, sans-serif" font-weight="bold" font-size="15.7" fill="#d4d4d4">min: 0,0</text><polyline points="208.0,428.8 214.2,428.8 220.4,428.8 226.6,428.8 232.8,428.8 239.0,428.8 245.2,428.8 251.4,428.8 257.6,428.8 263.8,428.8 270.0,428.8 276.2,428.8 282.4,428.8 288.6,428.8 294.8,428.8 301.0,428.8 307.2,428.8 313.4,428.8 319.6,428.8 330.6,428.8 342.9,428.8 355.1,428.8 367.4,428.8 379.6,428.8 391.9,428.8 404.1,428.8 416.4,428.8 428.6,428.8 440.9,428.8 453.1,428.8 465.4,428.8 477.6,428.8 489.9,428.8 502.1,428.8 514.4,428.8 526.6,428.8 538.9,428.8 551.1,428.8 563.4,428.8 575.6,428.8 587.9,428.8 600.1,428.8 612.4,428.8 624.6,428.8 636.9,428.8 649.1,428.8 661.4,428.8 673.6,428.8 685.9,428.8 698.1,428.8 710.4,428.8 722.6,428.8 734.9,428.8 747.1,428.8 759.4,428.8 771.6,428.8 783.9,428.8 796.1,428.8 808.4,428.8" fill="none" stroke="#1a961a" stroke-width="1.3" marker-start="url(#dot)" marker-mid="url(#dot)" marker-end="url(#dot)"/><rect x="167" y="436.6" width="659" height="58.2" fill="#000"/><g stroke="#393939" stroke-width="1" stroke-dasharray="2 2"><line x1="233.3" y1="441.2" x2="233.3" y2="491.2"/><line x1="263.5" y1="441.2" x2="263.5" y2="491.2"/><line x1="293.6" y1="441.2" x2="293.6" y2="491.2"/><line x1="323.8" y1="441.2" x2="323.8" y2="491.2"/><line x1="354.0" y1="441.2" x2="354.0" y2="491.2"/><line x1="384.2" y1="441.2" x2="384.2" y2="491.2"/><line x1="414.3" y1="441.2" x2="414.3" y2="491.2"/><line x1="444.5" y1="441.2" x2="444.5" y2="491.2"/><line x1="474.7" y1="441.2" x2="474.7" y2="491.2"/><line x1="504.8" y1="441.2" x2="504.8" y2="491.2"/><line x1="535.0" y1="441.2" x2="535.0" y2="491.2"/><line x1="565.2" y1="441.2" x2="565.2" y2="491.2"/><line x1="595.3" y1="441.2" x2="595.3" y2="491.2"/><line x1="625.5" y1="441.2" x2="625.5" y2="491.2"/><line x1="655.7" y1="441.2" x2="655.7" y2="491.2"/><line x1="685.8" y1="441.2" x2="685.8" y2="491.2"/><line x1="716.0" y1="441.2" x2="716.0" y2="491.2"/><line x1="746.2" y1="441.2" x2="746.2" y2="491.2"/><line x1="776.4" y1="441.2" x2="776.4" y2="491.2"/><line x1="806.5" y1="441.2" x2="806.5" y2="491.2"/><line x1="207" y1="449.6" x2="811" y2="449.6"/><line x1="207" y1="458.0" x2="811" y2="458.0"/><line x1="207" y1="466.3" x2="811" y2="466.3"/><line x1="207" y1="474.6" x2="811" y2="474.6"/><line x1="207" y1="482.9" x2="811" y2="482.9"/></g><rect x="207" y="441.2" width="604" height="50.0" fill="none" stroke="#a8a8a8" stroke-width="1"/><text transform="translate(200.2,444.0) scale(.9,1)" font-family="Liberation Sans, sans-serif" font-size="7.7" fill="#ececec" text-anchor="end">150</text><line x1="203" y1="441.3" x2="207" y2="441.3" stroke="#dadada" stroke-width="1.2"/><text transform="translate(200.2,460.7) scale(.9,1)" font-family="Liberation Sans, sans-serif" font-size="7.7" fill="#ececec" text-anchor="end">100</text><line x1="203" y1="458.0" x2="207" y2="458.0" stroke="#dadada" stroke-width="1.2"/><text transform="translate(200.2,477.3) scale(.9,1)" font-family="Liberation Sans, sans-serif" font-size="7.7" fill="#ececec" text-anchor="end">50</text><line x1="203" y1="474.6" x2="207" y2="474.6" stroke="#dadada" stroke-width="1.2"/><text transform="translate(200.2,493.7) scale(.9,1)" font-family="Liberation Sans, sans-serif" font-size="7.7" fill="#ececec" text-anchor="end">0</text><line x1="203" y1="491.0" x2="207" y2="491.0" stroke="#dadada" stroke-width="1.2"/><text x="227.8" y="464.6" font-family="Liberation Sans, sans-serif" font-weight="bold" font-size="15.7" fill="#d4d4d4">max: 2,38</text><text x="227.8" y="484.1" font-family="Liberation Sans, sans-serif" font-weight="bold" font-size="15.7" fill="#d4d4d4">min: 0,00</text><polyline points="208.0,490.3 214.2,490.3 220.4,490.3 226.6,490.3 232.8,490.3 239.0,490.3 245.2,490.3 251.4,490.3 257.6,490.3 263.8,490.3 270.0,490.3 276.2,490.3 282.4,490.3 288.6,490.3 294.8,490.3 301.0,490.3 307.2,490.3 313.4,490.3 319.6,490.3 330.6,490.3 342.9,490.3 355.1,490.3 367.4,490.3 379.6,490.3 391.9,490.3 404.1,490.3 416.4,490.3 428.6,490.3 440.9,490.3 453.1,490.3 465.4,490.3 477.6,490.3 489.9,490.3 502.1,490.3 514.4,490.3 526.6,490.3 538.9,490.3 551.1,490.3 563.4,490.3 575.6,490.3 587.9,490.3 600.1,490.3 612.4,490.3 624.6,490.3 636.9,490.3 649.1,490.3 661.4,490.3 673.6,490.3 685.9,490.3 698.1,490.3 710.4,490.3 722.6,490.3 734.9,490.3 747.1,490.3 759.4,490.3 771.6,490.3 783.9,490.3 796.1,490.3 808.4,490.3" fill="none" stroke="#1a961a" stroke-width="1.3" marker-start="url(#dot)" marker-mid="url(#dot)" marker-end="url(#dot)"/><rect x="167" y="497.8" width="659" height="58.2" fill="#000"/><g stroke="#393939" stroke-width="1" stroke-dasharray="2 2"><line x1="233.3" y1="502.4" x2="233.3" y2="552.4"/><line x1="263.5" y1="502.4" x2="263.5" y2="552.4"/><line x1="293.6" y1="502.4" x2="293.6" y2="552.4"/><line x1="323.8" y1="502.4" x2="323.8" y2="552.4"/><line x1="354.0" y1="502.4" x2="354.0" y2="552.4"/><line x1="384.2" y1="502.4" x2="384.2" y2="552.4"/><line x1="414.3" y1="502.4" x2="414.3" y2="552.4"/><line x1="444.5" y1="502.4" x2="444.5" y2="552.4"/><line x1="474.7" y1="502.4" x2="474.7" y2="552.4"/><line x1="504.8" y1="502.4" x2="504.8" y2="552.4"/><line x1="535.0" y1="502.4" x2="535.0" y2="552.4"/><line x1="565.2" y1="502.4" x2="565.2" y2="552.4"/><line x1="595.3" y1="502.4" x2="595.3" y2="552.4"/><line x1="625.5" y1="502.4" x2="625.5" y2="552.4"/><line x1="655.7" y1="502.4" x2="655.7" y2="552.4"/><line x1="685.8" y1="502.4" x2="685.8" y2="552.4"/><line x1="716.0" y1="502.4" x2="716.0" y2="552.4"/><line x1="746.2" y1="502.4" x2="746.2" y2="552.4"/><line x1="776.4" y1="502.4" x2="776.4" y2="552.4"/><line x1="806.5" y1="502.4" x2="806.5" y2="552.4"/><line x1="207" y1="512.3" x2="811" y2="512.3"/><line x1="207" y1="522.3" x2="811" y2="522.3"/><line x1="207" y1="532.3" x2="811" y2="532.3"/><line x1="207" y1="542.3" x2="811" y2="542.3"/></g><rect x="207" y="502.4" width="604" height="50.0" fill="none" stroke="#a8a8a8" stroke-width="1"/><text transform="translate(200.2,515.0) scale(.9,1)" font-family="Liberation Sans, sans-serif" font-size="7.7" fill="#ececec" text-anchor="end">1.00</text><line x1="203" y1="512.3" x2="207" y2="512.3" stroke="#dadada" stroke-width="1.2"/><text transform="translate(200.2,535.0) scale(.9,1)" font-family="Liberation Sans, sans-serif" font-size="7.7" fill="#ececec" text-anchor="end">0.50</text><line x1="203" y1="532.3" x2="207" y2="532.3" stroke="#dadada" stroke-width="1.2"/><text transform="translate(200.2,554.9) scale(.9,1)" font-family="Liberation Sans, sans-serif" font-size="7.7" fill="#ececec" text-anchor="end">0.00</text><line x1="203" y1="552.2" x2="207" y2="552.2" stroke="#dadada" stroke-width="1.2"/><text x="227.8" y="525.8" font-family="Liberation Sans, sans-serif" font-weight="bold" font-size="15.7" fill="#d4d4d4">max: 0,625</text><text x="227.8" y="545.3" font-family="Liberation Sans, sans-serif" font-weight="bold" font-size="15.7" fill="#d4d4d4">min: 0,352</text><polyline points="208.0,538.0 213.0,537.0 219.4,533.0 225.5,530.8 231.7,529.3 237.9,529.9 244.1,529.9 250.3,529.9 256.5,529.9 262.7,529.9 268.9,529.9 275.1,529.9 281.3,529.9 287.5,529.9 293.7,529.9 299.9,529.9 306.1,529.9 312.3,529.9 318.5,529.9 324.7,529.9 330.6,527.0 343.0,527.0 354.7,528.0 367.0,535.0 379.5,533.6 391.8,535.7 404.0,537.0 416.0,538.0 428.0,538.0 440.7,538.0 453.0,538.0 465.4,538.0 477.8,536.7 490.0,536.7 501.7,536.7 514.0,536.7 526.5,535.0 538.5,530.0 550.6,529.6 563.0,530.8 575.0,529.6 587.7,529.6 599.7,528.6 611.8,528.6 623.8,528.6 636.0,528.0 648.6,536.7 660.6,536.7 673.0,536.7 685.0,536.7 697.0,533.0 709.8,530.0 721.8,530.0 734.0,531.4 746.0,531.4 758.0,529.6 770.4,530.8 783.0,535.4 795.0,529.6 807.8,527.7" fill="none" stroke="#1a961a" stroke-width="1.3" marker-start="url(#dot)" marker-mid="url(#dot)" marker-end="url(#dot)"/></svg>
<div class="a" style="left:828px;top:65px;width:1px;height:494px;background:#f8f8f8"></div>
<div class="a" style="left:4px;top:558px;width:825px;height:1px;background:#f8f8f8"></div>
<div class="a" style="left:831px;top:65px;width:1px;height:497px;background:#c8c8c8"></div>
<div class="a" style="left:833px;top:65px;width:1px;height:497px;background:#e2e2e2"></div>
<div class="a" style="left:1074px;top:72px;width:2px;height:480px;background:#dbdbdb"></div>
<div class="a" style="left:837px;top:76px;width:236px;height:312px;background:#808080"></div>
<div class="a" style="left:846px;top:79px;font-size:11.8px;line-height:14px;font-weight:bold;color:#f4f4f4">Выбор набора параметров (F6)</div>
<div class="a" style="left:846px;top:96px;width:218px;height:20px;background:#fff;border:1px solid #6e6e6e;border-right-color:#e6e6e6;border-bottom-color:#e6e6e6">
<div class="a" style="left:1px;top:1px;width:200px;height:15px;background:#3399ff"></div>
<div class="a" style="left:2px;top:2px;font-size:12px;line-height:15px;font-weight:bold;color:#fff">Пользовательский</div>
<div class="a" style="left:202px;top:1px;width:14px;height:16px;background:#e4e4e4;border:1px solid #fff;border-right-color:#707070;border-bottom-color:#707070"></div>
<div class="a" style="left:206px;top:8px;width:0;height:0;border-left:3px solid transparent;border-right:3px solid transparent;border-top:3px solid #000"></div>
</div>
<div class="a" style="left:846px;top:122px;width:218px;height:214px;background:#d6d6d6;border:1px solid #6e6e6e;border-right-color:#f0f0f0;border-bottom-color:#f0f0f0;overflow:hidden"><div class="cb" style="top:3.5px"><svg class="a" style="left:0;top:0" width="7" height="7" viewBox="0 0 7 7"><path d="M1 3.2 L2.8 5.2 L6 1.4" fill="none" stroke="#000" stroke-width="1.5"/></svg></div><div class="li" style="top:1.0px">Температура охл. жидкости</div><div class="cb" style="top:18.0px"><svg class="a" style="left:0;top:0" width="7" height="7" viewBox="0 0 7 7"><path d="M1 3.2 L2.8 5.2 L6 1.4" fill="none" stroke="#000" stroke-width="1.5"/></svg></div><div class="li" style="top:15.5px">Соотношение воздух/топливо</div><div class="cb" style="top:32.4px"><svg class="a" style="left:0;top:0" width="7" height="7" viewBox="0 0 7 7"><path d="M1 3.2 L2.8 5.2 L6 1.4" fill="none" stroke="#000" stroke-width="1.5"/></svg></div><div class="li" style="top:29.9px">Пол. дроссельной заслонки</div><div class="cb" style="top:46.9px"><svg class="a" style="left:0;top:0" width="7" height="7" viewBox="0 0 7 7"><path d="M1 3.2 L2.8 5.2 L6 1.4" fill="none" stroke="#000" stroke-width="1.5"/></svg></div><div class="li" style="top:44.4px">Скорость вращения двиг.</div><div class="cb" style="top:61.3px"></div><div class="li" style="top:58.8px">Скорость вр. двиг. на х/х</div><div class="cb" style="top:75.8px"></div><div class="li" style="top:73.3px">Желаемое пол. рег. х/х</div><div class="cb" style="top:90.3px"></div><div class="li" style="top:87.8px">Текущее пол. рег. х/х</div><div class="cb" style="top:104.7px"></div><div class="li" style="top:102.2px">Коэф. коррекции вр. впр.</div><div class="cb" style="top:119.2px"></div><div class="li" style="top:116.7px">Угол опережения зажигания</div><div class="cb" style="top:133.6px"></div><div class="li" style="top:131.1px">Скорость автомобиля</div><div class="cb" style="top:148.1px"><svg class="a" style="left:0;top:0" width="7" height="7" viewBox="0 0 7 7"><path d="M1 3.2 L2.8 5.2 L6 1.4" fill="none" stroke="#000" stroke-width="1.5"/></svg></div><div class="li" style="top:145.6px">Напряжение бортсети</div><div class="cb" style="top:162.6px"></div><div class="li" style="top:160.1px">Желаемые обороты х/х</div><div class="cb" style="top:177.0px"><svg class="a" style="left:0;top:0" width="7" height="7" viewBox="0 0 7 7"><path d="M1 3.2 L2.8 5.2 L6 1.4" fill="none" stroke="#000" stroke-width="1.5"/></svg></div><div class="li" style="top:174.5px">Напряжение на ДК</div><div class="cb" style="top:191.5px"></div><div class="li" style="top:189.0px">Готовность ДК</div><div class="cb" style="top:205.9px"></div><div class="li" style="top:203.4px">Разрешение нагрева ДК</div><div class="a" style="left:203px;top:0;width:13px;height:212px;background:#ebebeb"></div><div class="a" style="left:207px;top:7px;width:0;height:0;border-left:3px solid transparent;border-right:3px solid transparent;border-bottom:3px solid #222"></div><div class="a" style="left:207px;top:203px;width:0;height:0;border-left:3px solid transparent;border-right:3px solid transparent;border-top:3px solid #222"></div><div class="a" style="left:203px;top:16px;width:12px;height:67px;border:1px solid #a0a0a0;border-radius:2px;background:linear-gradient(90deg,#f6f6f6,#e2e2e2 50%,#cfcfcf)"></div><div class="a" style="left:207px;top:47px;width:5px;height:1px;background:#666"></div><div class="a" style="left:207px;top:49px;width:5px;height:1px;background:#666"></div><div class="a" style="left:207px;top:51px;width:5px;height:1px;background:#666"></div></div>
<div class="btn" style="left:902px;top:353px;width:102px;height:25px;font-size:12.3px;line-height:25px;padding-left:1px">Убрать ВСЕ (&lt;)</div>
<div class="etch" style="left:837px;top:399px;width:236px;height:92px"></div>
<div class="a" style="left:838px;top:400px;width:234px;height:17px;background:#808080"></div>
<div class="a" style="left:841px;top:401px;font-size:12.1px;line-height:14px;font-weight:bold;color:#f4f4f4">Управление ИМ (F5)</div>
<div class="a" style="left:845px;top:426px;width:221px;height:20px;background:#fff;border:1px solid #6e6e6e;border-right-color:#f4f4f4;border-bottom-color:#f4f4f4">
<div class="a" style="left:2px;top:2px;font-size:11.6px;line-height:14px">Форсунка 1</div>
<div class="a" style="left:205px;top:1px;width:14px;height:16px;background:#e4e4e4;border:1px solid #fff;border-right-color:#707070;border-bottom-color:#707070"></div>
<div class="a" style="left:209px;top:8px;width:0;height:0;border-left:3px solid transparent;border-right:3px solid transparent;border-top:3px solid #000"></div>
</div>
<div class="btn" style="left:845px;top:459px;width:64px;height:24px;font-size:12px;line-height:23px;padding-left:2px">В<u>ы</u>кл.</div>
<div class="btn" style="left:909px;top:459px;width:57px;height:24px;font-size:12px;line-height:23px;padding-left:2px"><u>В</u>кл.</div>
<div class="btn" style="left:966px;top:459px;width:27px;height:24px"><svg class="a" style="left:6px;top:4px" width="15" height="15" viewBox="0 0 15 15"><circle cx="7.5" cy="7.5" r="6.8" fill="#d8232a" stroke="#8e1116" stroke-width=".8"/><path d="M4.8 4.8 L10.2 10.2 M10.2 4.8 L4.8 10.2" stroke="#fff" stroke-width="2.2" stroke-linecap="round"/></svg></div>
<div class="a t12" style="left:1001px;top:464px">Выключено</div>
<div class="etch" style="left:837px;top:503px;width:236px;height:42px"></div>
<div class="a" style="left:855px;top:518px;font-size:11.4px;line-height:14px">Пауза</div>
<div class="a" style="left:893.5px;top:517.5px;width:4.6px;height:12.5px;background:linear-gradient(90deg,#ff4040,#d00808 60%,#9c0000)"></div><div class="a" style="left:899.9px;top:517.5px;width:4.8px;height:12.5px;background:linear-gradient(90deg,#ff4040,#d00808 60%,#9c0000)"></div>
<div class="a" style="left:931px;top:518px;font-size:11.6px;line-height:14px">Уже</div>
<svg class="a" style="left:961px;top:518px" width="19" height="13" viewBox="0 0 19 13"><path d="M0.5 0.5 L8 6.5 L0.5 12.5 Z" fill="#4a4a4a"/><path d="M17.5 0.5 L10.5 6.5 L17.5 12.5 Z" fill="#6a6a6a"/></svg>
<div class="a" style="left:1000px;top:518px;font-size:11.7px;line-height:14px">Шире</div>
<svg class="a" style="left:1038px;top:518px" width="18" height="13" viewBox="0 0 18 13"><path d="M7 0.5 L0.5 6.5 L7 12.5 Z" fill="#6a6a6a"/><path d="M10 0.5 L17 6.5 L10 12.5 Z" fill="#4a4a4a"/></svg>
<div class="a" style="left:0;top:564px;width:1100px;height:1px;background:#a2a2a2"></div>
<div class="a" style="left:0;top:565px;width:1100px;height:1px;background:#f8f8f8"></div>
<div class="sf" style="left:1px;width:213px;padding-left:4px">Открыт порт COM7</div>
<div class="sf" style="left:215px;width:214px;padding-left:2px;font-size:12.6px">Данные получены</div>
<div class="sf" style="left:430px;width:418px"></div>
<div class="sf" style="left:849px;width:137px;text-align:center;font-size:12.3px">202мс | 0:7:2,859c</div>
<div class="sf" style="left:988px;width:46px;text-align:center;font-size:12px">K-Line</div>
<div class="sf" style="left:1037px;width:62px;background:#fa0c12;color:#ffecec;border-color:#fa0c12;padding-left:3px;font-size:12.8px">Допуски</div>
<div class="a" style="left:0;top:587px;width:1100px;height:31px;background:linear-gradient(90deg,#2d6ea6 0,#3a80a0 70px,#4a9199 130px,#53989a 180px,#448f98 270px,#3d8799 420px,#3379a3 540px,#2b6ba4 630px,#255d96 710px,#1e4c80 790px,#1b4272 870px,#1a3b64 950px,#1b3759 1100px)"></div>
<div class="a" style="left:0;top:587px;width:1100px;height:31px;background:linear-gradient(180deg,rgba(255,255,255,.18) 0,rgba(255,255,255,.04) 3px,rgba(0,0,0,0) 14px,rgba(0,0,20,.16) 31px)"></div>
<div class="a" style="left:0;top:586px;width:1100px;height:1px;background:#5e7f95"></div>
<svg class="a" style="left:440px;top:587px" width="400" height="31" viewBox="0 0 400 31"><defs><filter id="bl" x="-20%" y="-60%" width="140%" height="220%"><feGaussianBlur stdDeviation="1.8"/></filter><filter id="bl2" x="-20%" y="-60%" width="140%" height="220%"><feGaussianBlur stdDeviation="5"/></filter></defs><path d="M255 -3 C300 0 335 12 366 36" fill="none" stroke="#d6ecea" stroke-opacity=".7" stroke-width="4" filter="url(#bl)"/><path d="M20 34 C70 10 120 2 170 -2" fill="none" stroke="#9fd0d0" stroke-opacity=".28" stroke-width="9" filter="url(#bl2)"/></svg>
<svg class="a" style="left:5px;top:588px" width="32" height="30" viewBox="0 0 32 30"><defs><radialGradient id="orb" cx="50%" cy="35%" r="65%"><stop offset="0" stop-color="#9fd0f2"/><stop offset=".55" stop-color="#2f7fc4"/><stop offset="1" stop-color="#113a78"/></radialGradient></defs>
<circle cx="16" cy="15" r="14" fill="url(#orb)" stroke="#0e2c58" stroke-width="1"/>
<path d="M9 9.5 C11 8.4 13 8.6 15 9.6 L13.8 14.6 C12 13.6 10 13.6 7.8 14.6 Z" fill="#e8542a"/>
<path d="M16.4 10 C18.4 11 20.6 10.8 22.6 9.8 L21.4 14.8 C19.4 15.8 17.2 15.8 15.2 14.8 Z" fill="#7cc043"/>
<path d="M7.4 16 C9.6 15 11.6 15 13.4 16 L12.2 21 C10.4 20 8.4 20 6.2 21 Z" fill="#2f9be0"/>
<path d="M14.8 16.4 C16.8 17.4 19 17.4 21 16.4 L19.8 21.4 C17.8 22.4 15.6 22.4 13.6 21.4 Z" fill="#f7c62a"/>
<ellipse cx="16" cy="8" rx="10" ry="5.5" fill="#fff" fill-opacity=".22"/></svg>
<svg class="a" style="left:58px;top:590px" width="28" height="24" viewBox="0 0 28 24"><path d="M2 3 L10 3 L12 5 L25 5 L25 20 L2 20 Z" fill="#f3dc8c" stroke="#c9a84a" stroke-width=".8"/><rect x="4" y="2" width="3" height="2" fill="#58b04a"/><rect x="8" y="1.6" width="3" height="2" fill="#d84a3a"/><path d="M1 9 L26 9 L24.6 21 L2.4 21 Z" fill="#f7e7a6" stroke="#d2b45c" stroke-width=".8"/><path d="M5 15 L22 15 L22 22 L5 22 Z" fill="#8fc8ee" stroke="#4a96cc" stroke-width=".9"/><rect x="8" y="18" width="11" height="4" fill="#d6ecfa"/></svg>
<svg class="a" style="left:110px;top:590px" width="24" height="24" viewBox="0 0 24 24"><circle cx="12" cy="12" r="11.3" fill="#141414"/><circle cx="12" cy="12" r="8.7" fill="#f39a1e"/><ellipse cx="12" cy="8.6" rx="7" ry="4.6" fill="#ffc65a" fill-opacity=".55"/><path d="M12 5.4 L18.2 16.8 L5.8 16.8 Z" fill="#151515"/><path d="M12 11 L14.3 15 L9.7 15 Z" fill="#f7a62a"/></svg>
<svg class="a" style="left:160px;top:590px" width="24" height="24" viewBox="0 0 24 24"><circle cx="12" cy="12" r="11.2" fill="#e8e8e8"/><path d="M12 12 L2.3 6.4 A11.2 11.2 0 0 1 21.7 6.4 Z" fill="#dd4b39"/><path d="M12 12 L21.7 6.4 A11.2 11.2 0 0 1 12 23.2 Z" fill="#f4c20d"/><path d="M12 12 L12 23.2 A11.2 11.2 0 0 1 2.3 6.4 Z" fill="#3aa757"/><circle cx="12" cy="12" r="5.2" fill="#f4f4f4"/><circle cx="12" cy="12" r="4.1" fill="#4a8af4"/></svg>
<div class="a" style="left:198px;top:587px;width:48px;height:31px;border:1px solid #2c4a58;border-bottom:0;border-radius:2px 2px 0 0;background:linear-gradient(180deg,rgba(226,236,234,.94) 0,rgba(206,220,218,.9) 40%,rgba(182,202,200,.9) 50%,rgba(192,212,210,.9) 100%);box-shadow:inset 1px 1px 0 rgba(255,255,255,.9),inset -1px 0 0 rgba(255,255,255,.7)"></div>
<svg class="a" style="left:207px;top:589px" width="30" height="28" viewBox="-12.6 -12.5 30 28"><defs><radialGradient id="hub" cx="45%" cy="35%" r="70%"><stop offset="0" stop-color="#6a6a6a"/><stop offset="1" stop-color="#2b2b2b"/></radialGradient></defs>
<circle cx="0" cy="0" r="10.9" fill="#121212"/>
<circle cx="0" cy="-5.2" r="2.3" fill="#f4f4f4"/><path d="M0 -6.6 L0 -4.6" stroke="#555" stroke-width=".7"/>
<ellipse cx="-5.4" cy="-4.2" rx="1.5" ry="1" fill="#eef2f2"/><ellipse cx="5.4" cy="-4.2" rx="1.5" ry="1" fill="#eef2f2"/>
<path d="M-8.4 -1.4 L-4.6 -1.9 L-4.8 -0.5 L-8.3 0.2 Z" fill="#dfe8e8"/><path d="M8.4 -1.4 L4.6 -1.9 L4.8 -0.5 L8.3 0.2 Z" fill="#dfe8e8"/>
<path d="M-7.8 2.6 L-4.6 3.6 L-3 7.2 L-4.6 7.6 Q-7.4 5.6 -7.8 2.6 Z" fill="#dfe8e8"/><path d="M7.8 2.6 L4.6 3.6 L3 7.2 L4.6 7.6 Q7.4 5.6 7.8 2.6 Z" fill="#dfe8e8"/>
<ellipse cx="0" cy="7.9" rx="3" ry="1.3" fill="#dfe8e8"/>
<circle cx="0" cy="0.6" r="4.6" fill="url(#hub)" stroke="#111" stroke-width=".8"/>
<path d="M9.3 2.2 L14.9 7.8 L9.3 13.4 L3.7 7.8 Z" fill="#f0d020" stroke="#8a7400" stroke-width=".7" stroke-linejoin="round"/><circle cx="9.3" cy="6.4" r="1.5" fill="#1c1608"/><rect x="8.6" y="7.2" width="1.4" height="3.6" fill="#1c1608"/></svg>
<div class="a" style="left:928px;top:595px;font-size:9.2px;line-height:10px;color:#fff;letter-spacing:-0.4px">EN</div>
<div class="a" style="left:953px;top:601px;width:0;height:0;border-left:3px solid transparent;border-right:3px solid transparent;border-bottom:3.5px solid #f0f0f0"></div>
<svg class="a" style="left:968px;top:596px" width="56" height="14" viewBox="0 0 56 14">
<path d="M2.7 1 L2.7 12" stroke="#fff" stroke-width="1.3"/><path d="M3.5 1.6 L9 1.6 L9 3.4 L13.6 5.2 L9.6 7.4 L7.4 7.4 L7.4 6.6 L3.5 6.6 Z" fill="#fff"/>
<rect x="23.6" y="3.6" width="8.6" height="6.6" fill="#2a4a6e" stroke="#f2f2f2" stroke-width="1.3"/><path d="M22.2 1 L22.2 4.4 M20.8 2.4 L23.8 2.4" stroke="#fff" stroke-width="1.1"/><rect x="22.6" y="11.2" width="9" height="1.3" fill="#f2f2f2"/><rect x="27.6" y="6.4" width="5.4" height="5" fill="#e0202a"/><path d="M28.8 7.6 L31.8 10.2 M31.8 7.6 L28.8 10.2" stroke="#fff" stroke-width=".9"/>
<path d="M41 5 L43 5 L46.2 2 L46.2 12 L43 9 L41 9 Z" fill="#fff"/><path d="M47.8 4.6 Q49.2 7 47.8 9.4 M49.6 3.2 Q51.8 7 49.6 10.8" fill="none" stroke="#e6eef4" stroke-width=".9"/></svg>
<div class="a" style="left:1027px;top:591px;width:60px;text-align:center;font-size:10.3px;line-height:11px;color:#fff;transform:scaleX(.845)">10:19</div>
<div class="a" style="left:1027px;top:604.5px;width:60px;text-align:center;font-size:10.3px;line-height:11px;color:#fff;transform:scaleX(.84)">05.08.2015</div>
<div class="a" style="left:1090px;top:587px;width:10px;height:31px;border-left:1px solid #0f2238;box-shadow:inset 1px 0 0 #7d92a6;background:linear-gradient(180deg,#5a7690 0,#3c5a78 45%,#213e5e 55%,#2a4868 100%)"></div>
</body></html>
